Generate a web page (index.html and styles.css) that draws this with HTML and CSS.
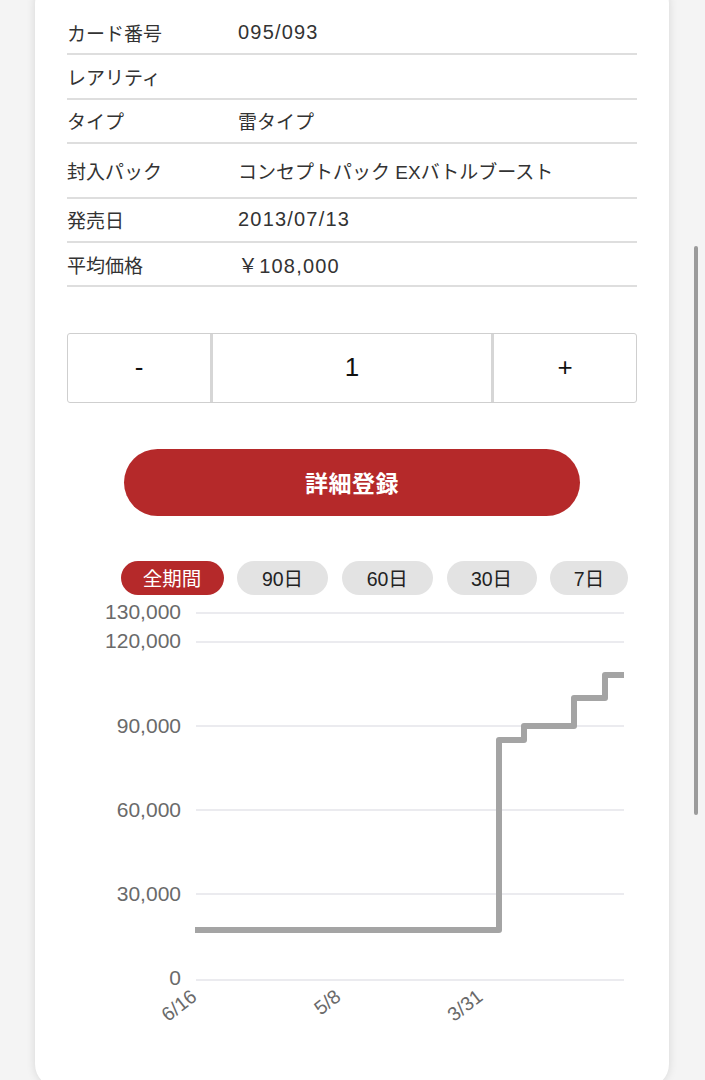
FILE: index.html
```html
<!DOCTYPE html>
<html lang="ja">
<head>
<meta charset="utf-8">
<title>カード詳細</title>
<link rel="stylesheet" href="styles.css">
</head>
<body>
<div class="page">
  <section class="card">
    <dl class="info">
      <div class="row"><dt>カード番号</dt><dd class="num">095/093</dd></div>
      <div class="row"><dt>レアリティ</dt><dd></dd></div>
      <div class="row"><dt>タイプ</dt><dd>雷タイプ</dd></div>
      <div class="row tall"><dt>封入パック</dt><dd>コンセプトパック EXバトルブースト</dd></div>
      <div class="row"><dt>発売日</dt><dd class="num">2013/07/13</dd></div>
      <div class="row"><dt>平均価格</dt><dd class="num">￥108,000</dd></div>
    </dl>

    <div class="stepper">
      <button class="step" type="button">-</button>
      <div class="count">1</div>
      <button class="step" type="button">+</button>
    </div>

    <button class="register" type="button">詳細登録</button>

    <div class="periods">
      <button class="chip active" type="button">全期間</button>
      <button class="chip" type="button">90日</button>
      <button class="chip" type="button">60日</button>
      <button class="chip" type="button">30日</button>
      <button class="chip short" type="button">7日</button>
    </div>

    <svg class="chart" viewBox="0 0 570 440" width="570" height="440">
      <g class="grid">
        <line x1="129" y1="13" x2="557" y2="13"/>
        <line x1="129" y1="42" x2="557" y2="42"/>
        <line x1="129" y1="126" x2="557" y2="126"/>
        <line x1="129" y1="210" x2="557" y2="210"/>
        <line x1="129" y1="294" x2="557" y2="294"/>
        <line x1="129" y1="380" x2="557" y2="380"/>
      </g>
      <g class="ylabels">
        <text x="114" y="19">130,000</text>
        <text x="114" y="48">120,000</text>
        <text x="114" y="133">90,000</text>
        <text x="114" y="217">60,000</text>
        <text x="114" y="301">30,000</text>
        <text x="114" y="385">0</text>
      </g>
      <path class="price" d="M128 330 H432 V140 H457 V126 H507 V98 H538 V75 H557"/>
      <g class="xlabels">
        <text transform="translate(131 399) rotate(-38)">6/16</text>
        <text transform="translate(275 399) rotate(-38)">5/8</text>
        <text transform="translate(417 399) rotate(-38)">3/31</text>
      </g>
    </svg>
  </section>
</div>
<div class="scrollbar"></div>
</body>
</html>
```
FILE: styles.css
```css
html, body {
  margin: 0;
  padding: 0;
  overflow: hidden;
}

body {
  background: #f4f4f4;
  font-family: "Liberation Sans", "Noto Sans CJK JP", sans-serif;
}

.page {
  width: 634px;
  margin-left: 35px;
}

.card {
  margin-top: -20px;
  background: #ffffff;
  border-radius: 24px;
  box-shadow: 0 0 10px rgba(0, 0, 0, 0.12);
  padding: 31px 32px 48px;
}

/* info table */
.info {
  margin: 0;
}

.row {
  display: flex;
  align-items: center;
  height: 44.4px;
  box-sizing: border-box;
  border-bottom: 2px solid #dedede;
  font-size: 19px;
  color: #333333;
}

.row.tall {
  height: 54.4px;
}

.row dt {
  width: 171px;
  flex: none;
}

.row dd {
  margin: 0;
}

.num {
  font-size: 20px;
  letter-spacing: 1.2px;
}

/* quantity stepper */
.stepper {
  margin-top: 45.3px;
  display: grid;
  grid-template-columns: 1fr 2fr 1fr;
  height: 70px;
  box-sizing: border-box;
  border: 1.5px solid #cfcfcf;
  border-radius: 3px;
}

.step,
.count {
  display: flex;
  align-items: center;
  justify-content: center;
  font-family: "Liberation Sans", "Noto Sans CJK JP", sans-serif;
  font-size: 26px;
  color: #111111;
  background: none;
  border: none;
  padding: 0;
}

.count {
  border-left: 3px solid #d6d6d6;
  border-right: 3px solid #d6d6d6;
}

/* register button */
.register {
  display: block;
  margin: 46px auto 0;
  width: 456px;
  height: 67px;
  border: none;
  border-radius: 34px;
  background: #b5292a;
  color: #ffffff;
  font-family: "Noto Sans CJK JP", sans-serif;
  font-weight: 700;
  font-size: 23px;
  letter-spacing: 0.5px;
}

/* period chips */
.periods {
  margin-top: 45px;
  display: grid;
  grid-template-columns: 103px 91px 91.5px 90px 78px;
  justify-content: end;
  column-gap: 13.5px;
  padding-right: 9px;
}

.chip {
  height: 34px;
  border: none;
  border-radius: 17px;
  background: #e3e3e3;
  color: #222222;
  font-family: "Liberation Sans", "Noto Sans CJK JP", sans-serif;
  font-size: 19.5px;
  padding: 0;
  display: flex;
  align-items: center;
  justify-content: center;
}

.chip.active {
  background: #b5292a;
  color: #ffffff;
}

/* chart */
.chart {
  display: block;
  margin-top: 5px;
  overflow: visible;
}

.grid line {
  stroke: #e4e4ea;
  stroke-width: 1.5;
}

.ylabels text {
  font-family: "Liberation Sans", sans-serif;
  font-size: 21px;
  fill: #6a6a6a;
  text-anchor: end;
}

.xlabels text {
  font-family: "Liberation Sans", sans-serif;
  font-size: 19.5px;
  fill: #6a6a6a;
  text-anchor: end;
}

.price {
  fill: none;
  stroke: #a4a4a4;
  stroke-width: 6;
  stroke-linejoin: round;
}

/* overlay scrollbar thumb */
.scrollbar {
  position: fixed;
  right: 7px;
  top: 246px;
  width: 4px;
  height: 569px;
  border-radius: 2px;
  background: #9b9b9b;
}
```
